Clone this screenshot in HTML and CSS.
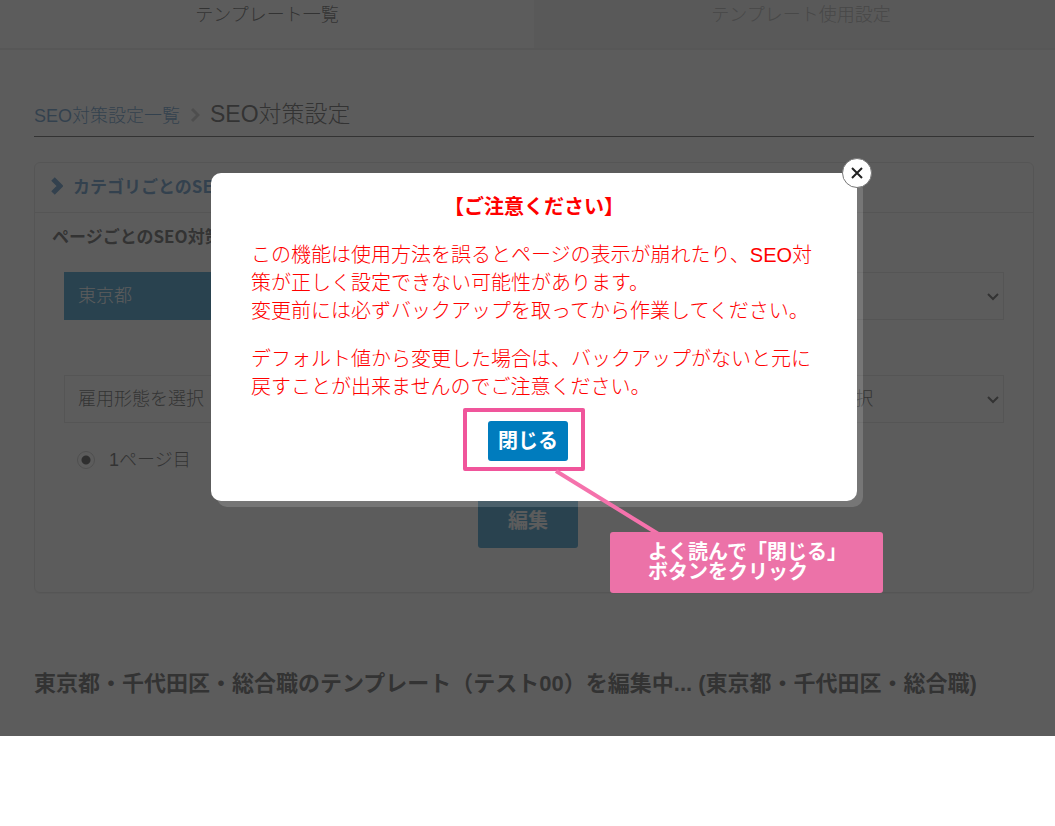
FILE: index.html
```html
<!DOCTYPE html>
<html lang="ja">
<head>
  <meta charset="utf-8">
  <title>SEO対策設定</title>
  <link rel="stylesheet" href="styles.css">
</head>
<body>
  <div class="page">
    <div class="inner">
      <nav class="tabs">
        <a class="tab active" href="#">テンプレート一覧</a>
        <a class="tab" href="#">テンプレート使用設定</a>
      </nav>

      <main class="content">
        <div class="breadcrumb">
          <a href="#">SEO対策設定一覧</a>
          <svg class="sep" width="10" height="14" viewBox="0 0 10 14"><path d="M2 1l6 6-6 6" fill="none" stroke="#bbb" stroke-width="3"/></svg>
          <h1>SEO対策設定</h1>
        </div>

        <section class="panel">
          <a class="panel-link" href="#">
            <svg width="12" height="18" viewBox="0 0 12 18"><path d="M2 2l7 7-7 7" fill="none" stroke="#337ab7" stroke-width="5"/></svg>
            カテゴリごとのSEO対策設定
          </a>
          <form class="panel-body">
            <h2>ページごとのSEO対策設定</h2>
            <div class="selects">
              <div class="select selected">
                <select aria-label="都道府県"><option>東京都</option></select>
              </div>
              <div class="select">
                <select aria-label="市区町村"><option>市区町村を選択</option></select>
              </div>
              <div class="select">
                <select aria-label="駅"><option>駅を選択</option></select>
                <svg width="12" height="8" viewBox="0 0 12 8"><path d="M1 1l5 5 5-5" fill="none" stroke="#333" stroke-width="2"/></svg>
              </div>
              <div class="select">
                <select aria-label="雇用形態"><option>雇用形態を選択</option></select>
              </div>
              <div class="select">
                <select aria-label="職種"><option>職種を選択</option></select>
              </div>
              <div class="select">
                <select aria-label="こだわり条件"><option>こだわり条件を選択</option></select>
                <svg width="12" height="8" viewBox="0 0 12 8"><path d="M1 1l5 5 5-5" fill="none" stroke="#333" stroke-width="2"/></svg>
              </div>
            </div>
            <label class="radio"><input type="radio" name="pageno" checked>1ページ目</label>
            <div class="actions">
              <button class="btn btn-edit" type="button">編集</button>
            </div>
          </form>
        </section>

        <h3 class="editing">東京都・千代田区・総合職のテンプレート（テスト00）を編集中... (東京都・千代田区・総合職)</h3>
      </main>

      <div class="overlay">
        <div class="modal" role="dialog" aria-labelledby="modal-title">
          <button class="modal-close" type="button" aria-label="Close">
            <svg width="14" height="14" viewBox="0 0 14 14"><path d="M2 2l10 10M12 2L2 12" stroke="#222" stroke-width="2"/></svg>
          </button>
          <p class="modal-title" id="modal-title">【ご注意ください】</p>
          <p>この機能は使用方法を誤るとページの表示が崩れたり、SEO対策が正しく設定できない可能性があります。<br>変更前には必ずバックアップを取ってから作業してください。</p>
          <p>デフォルト値から変更した場合は、バックアップがないと元に戻すことが出来ませんのでご注意ください。</p>
          <div class="actions">
            <button class="btn btn-close" type="button">閉じる</button>
          </div>
          <!-- 操作ガイド -->
          <div class="guide">
            <div class="guide-frame"></div>
            <svg class="guide-line" width="108" height="68" viewBox="0 0 108 68"><path d="M2 2l104 64" stroke="#f572ac" stroke-width="4"/></svg>
            <p class="guide-text">よく読んで「閉じる」<br>ボタンをクリック</p>
          </div>
        </div>
      </div>
    </div>
  </div>
</body>
</html>
```

FILE: styles.css
```css
* {
  box-sizing: border-box;
}
body {
  margin: 0;
  background: #fff;
  color: #333;
  font-family: "Liberation Sans", "Noto Sans CJK JP", sans-serif;
  font-size: 18px;
  font-weight: 300;
  line-height: 24px;
}
h1, h2, h3, p {
  margin: 0;
}
a {
  color: #337ab7;
  text-decoration: none;
}
button, select, input {
  font: inherit;
}

.page {
  overflow: hidden;
}
/* 右端はスクロールバーの分だけはみ出す */
.inner {
  position: relative;
  margin-right: -13px;
}

/* タブ */
.tabs {
  display: flex;
  border-bottom: 2px solid #e6e6e6;
}
.tab {
  flex: 1;
  padding: 3px 0 21px;
  background: #eee;
  color: #999;
  text-align: center;
}
.tab.active {
  background: #fff;
  color: #333;
}

.content {
  padding: 50px 34px 37px;
}
.breadcrumb {
  display: flex;
  align-items: baseline;
  gap: 10px;
  padding-bottom: 8px;
  border-bottom: 1px solid #333;
}
.breadcrumb h1 {
  font-size: 23px;
  font-weight: 300;
  line-height: 28px;
}

/* 設定パネル */
.panel {
  margin-top: 25px;
  border: 1px solid #ddd;
  border-radius: 6px;
  box-shadow: 0 1px 1px #eee;
}
.panel-link {
  display: flex;
  align-items: center;
  gap: 10px;
  padding: 11px 16px 14px;
  border-bottom: 1px solid #ddd;
}
.panel-link, .panel h2 {
  font-family: "Noto Sans CJK JP", sans-serif;
  font-size: 17px;
  font-weight: bold;
}
.panel-body {
  padding: 11px 29px 44px;
}
.panel h2 {
  margin-left: -12px;
}
.selects {
  display: grid;
  grid-template-columns: repeat(3, 1fr);
  gap: 55px 10px;
  margin-top: 24px;
}
.select {
  position: relative;
}
.select select {
  display: block;
  width: 100%;
  height: 48px;
  padding: 0 13px;
  border: 1px solid #ddd;
  border-radius: 0;
  background: #fff;
  color: #333;
  appearance: none;
}
.select.selected select {
  border-color: #007cbe;
  background: #007cbe;
  color: #fff;
}
.select svg {
  position: absolute;
  right: 5px;
  top: 21px;
}
.radio {
  display: flex;
  align-items: center;
  gap: 14px;
  margin: 25px 0 0 13px;
}
.radio input {
  width: 18px;
  height: 18px;
  margin: 0;
  border: 1px solid #bbb;
  border-radius: 50%;
  background: radial-gradient(circle, #222 4px, #fff 5px);
  appearance: none;
}
.actions {
  text-align: center;
}
.btn {
  margin-right: 12px;
  padding: 0;
  border: 0;
  border-radius: 3px;
  background: #007cbe;
  color: #fff;
  font-size: 20px;
  font-weight: bold;
}
.btn-edit {
  width: 100px;
  height: 54px;
  margin-top: 22px;
}
.btn-close {
  width: 80px;
  height: 40px;
}

.editing {
  margin-top: 76px;
  font-size: 22px;
  line-height: 30px;
  white-space: nowrap;
}

/* モーダル */
.overlay {
  position: absolute;
  inset: 0;
  display: flex;
  justify-content: center;
  align-items: flex-start;
  padding-top: 173px;
  background: rgba(51, 51, 51, .8);
}
.modal {
  position: relative;
  width: 646px;
  padding: 20px 40px 40px;
  border-radius: 10px;
  background: #fff;
  box-shadow: 6px 6px 0 rgba(255, 255, 255, .16);
  color: #f00;
  font-size: 20px;
  line-height: 28px;
}
.modal p {
  margin-bottom: 20px;
}
.modal .modal-title {
  font-weight: bold;
  text-align: center;
}
.modal-close {
  position: absolute;
  top: -15px;
  right: -15px;
  display: flex;
  align-items: center;
  justify-content: center;
  width: 30px;
  height: 30px;
  padding: 0;
  border: 1px solid #777;
  border-radius: 50%;
  background: #fff;
}

/* 操作ガイド */
.guide-frame {
  position: absolute;
  left: 252px;
  top: 235px;
  width: 122px;
  height: 63px;
  border: 4px solid #f0559b;
  border-radius: 2px;
}
.guide-line {
  position: absolute;
  left: 343px;
  top: 296px;
}
.modal .guide-text {
  position: absolute;
  left: 399px;
  top: 359px;
  width: 273px;
  margin: 0;
  padding: 10px 0 11px 38px;
  border-radius: 3px;
  background: #ec72a8;
  color: #fff;
  font-weight: bold;
  line-height: 20px;
}
```
